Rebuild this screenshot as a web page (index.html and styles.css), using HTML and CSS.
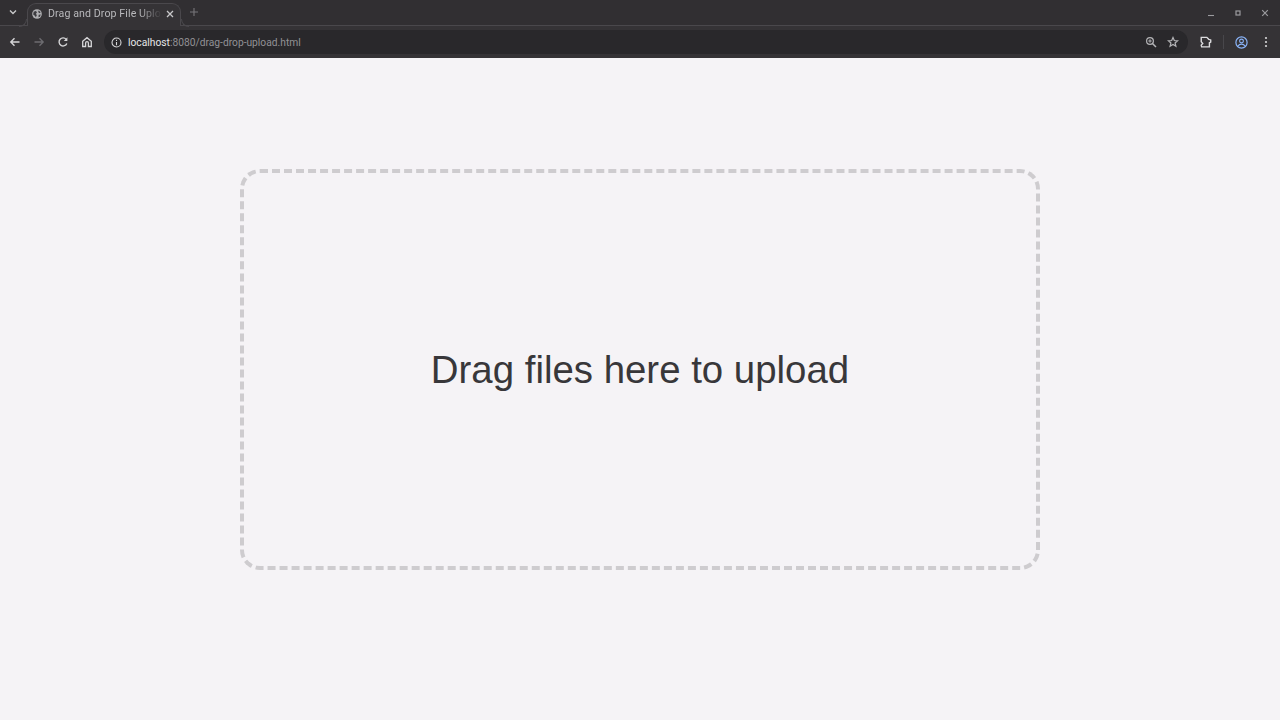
FILE: index.html
```html
<!DOCTYPE html>
<html lang="en">
<head>
    <meta charset="UTF-8">
    <title>Drag and Drop File Upload</title>
    <link rel="stylesheet" href="styles.css">
</head>
<body>
    <div class="browser">
        <div class="tabstrip">
            <svg class="tab-menu" width="10" height="10" viewBox="0 0 10 10"><path d="M2 3.5 5 6.5 8 3.5" fill="none" stroke="#c8c8ca" stroke-width="1.4"/></svg>
            <div class="tab">
                <svg class="favicon" width="10" height="10" viewBox="0 0 12 12">
                    <circle cx="6" cy="6" r="5.8" fill="#b0b0b3"/>
                    <path d="M2 3.2 4.6 2.4 6 4 4.8 5.6 5.8 7.4 4.6 10 3.4 8 1.4 6.6ZM8 1.8 10.4 4 9 5 7.4 3.6ZM8 7 10.6 6.6 9.4 9.4 7.8 9.8Z" fill="#3d3c40"/>
                </svg>
                <span class="tab-title">Drag and Drop File Upload</span>
                <svg class="tab-close" width="8" height="8" viewBox="0 0 8 8"><path d="M1 1 7 7M7 1 1 7" stroke="#c8c8ca" stroke-width="1.3"/></svg>
            </div>
            <svg class="new-tab" width="10" height="10" viewBox="0 0 10 10"><path d="M5 1V9M1 5H9" stroke="#77767a" stroke-width="1.1"/></svg>
            <div class="window-controls">
                <svg width="10" height="10" viewBox="0 0 10 10"><path d="M2 7.5H8" stroke="#9b9b9e" stroke-width="1.1"/></svg>
                <svg width="10" height="10" viewBox="0 0 10 10"><rect x="3" y="3" width="4" height="4" fill="none" stroke="#9b9b9e" stroke-width="1.2"/></svg>
                <svg width="10" height="10" viewBox="0 0 10 10"><path d="M2.2 2.2 7.8 7.8M7.8 2.2 2.2 7.8" stroke="#9b9b9e" stroke-width="1.2"/></svg>
            </div>
        </div>
        <div class="toolbar">
            <div class="nav-buttons">
                <svg width="12" height="12" viewBox="0 0 12 12"><path d="M10.5 6H2M5.5 2.2 1.8 6 5.5 9.8" fill="none" stroke="#d6d6d8" stroke-width="1.4"/></svg>
                <svg width="12" height="12" viewBox="0 0 12 12"><path d="M1.5 6H10M6.5 2.2 10.2 6 6.5 9.8" fill="none" stroke="#6d6c70" stroke-width="1.3"/></svg>
                <svg width="12" height="12" viewBox="0 0 12 12"><path d="M9.8 7.4A4 4 0 1 1 9.2 3.4" fill="none" stroke="#d6d6d8" stroke-width="1.4"/><path d="M10.4 1.2V5H6.8Z" fill="#d6d6d8"/></svg>
                <svg width="12" height="12" viewBox="0 0 12 12"><path d="M1.7 5.3 6 1.7 10.3 5.3V10.5H7.4V7A1.4 1.4 0 0 0 4.6 7V10.5H1.7Z" fill="none" stroke="#d6d6d8" stroke-width="1.3"/></svg>
            </div>
            <div class="omnibox">
                <svg class="info-icon" width="11" height="11" viewBox="0 0 12 12"><circle cx="6" cy="6" r="4.9" fill="none" stroke="#d6d6d8" stroke-width="1.2"/><path d="M6 5.4V9M6 3V4.3" stroke="#d6d6d8" stroke-width="1.2"/></svg>
                <span class="url"><span class="url-host">localhost</span>:8080/drag-drop-upload.html</span>
                <div class="omnibox-actions">
                    <svg width="12" height="12" viewBox="0 0 12 12"><circle cx="5" cy="5" r="3.4" fill="none" stroke="#b4b4b7" stroke-width="1.2"/><path d="M7.5 7.5 11 11" stroke="#b4b4b7" stroke-width="1.5"/><path d="M3.3 5H6.7M5 3.3V6.7" stroke="#b4b4b7"/></svg>
                    <svg width="12" height="12" viewBox="0 0 12 12"><path d="M6 1.5 7.3 4.5 10.6 4.8 8.1 7 8.9 10.3 6 8.5 3.1 10.3 3.9 7 1.4 4.8 4.7 4.5Z" fill="none" stroke="#b4b4b7" stroke-width="1.2"/></svg>
                </div>
            </div>
            <div class="toolbar-right">
                <svg class="ext-icon" width="14" height="14" viewBox="0 0 13 13"><path d="M3 2.2H8.2L10 4 11.8 4.6V6.6L10.6 7.2V11H3.4L3 9.4 4.4 7.8 3 6.2Z" fill="none" stroke="#dcdcde" stroke-width="1.3"/></svg>
                <span class="toolbar-divider"></span>
                <svg class="profile-icon" width="13" height="13" viewBox="0 0 13 13"><circle cx="6.5" cy="6.5" r="5.6" fill="none" stroke="#8ab4f8" stroke-width="1.2"/><circle cx="6.5" cy="5" r="1.9" fill="none" stroke="#8ab4f8" stroke-width="1.1"/><path d="M2.9 10A4.4 4.4 0 0 1 10.1 10" fill="none" stroke="#8ab4f8" stroke-width="1.1"/></svg>
                <svg class="more-icon" width="4" height="12" viewBox="0 0 4 12"><circle cx="2" cy="2" r="1.1" fill="#d6d6d8"/><circle cx="2" cy="6" r="1.1" fill="#d6d6d8"/><circle cx="2" cy="10" r="1.1" fill="#d6d6d8"/></svg>
            </div>
        </div>
    </div>

    <div class="page">
        <div class="drop-zone">Drag files here to upload</div>
    </div>
</body>
</html>
```
FILE: styles.css
```css
html, body { margin: 0; padding: 0; height: 100%; overflow: hidden; }
body { background: #f5f3f6; font-family: "Liberation Sans", Arial, sans-serif; }

.browser { height: 58px; background: #353336; font-family: Roboto, "Liberation Sans", sans-serif; }

.tabstrip {
    height: 26px;
    box-sizing: border-box;
    padding-bottom: 1px;
    display: flex;
    align-items: center;
    background: #312f32;
    border-bottom: 1px solid #4a484c;
    position: relative;
}
.tab-menu { margin-left: 8px; }

.tab {
    width: 154px;
    height: 23px;
    margin: 3px 0 0 9px;
    padding: 0 6px 3px 4px;
    box-sizing: border-box;
    display: flex;
    align-items: center;
    align-self: flex-start;
    background: #353336;
    border: 1px solid #4a484c;
    border-bottom: none;
    border-radius: 9px 9px 0 0;
    position: relative;
}
.tab::before,
.tab::after {
    content: "";
    position: absolute;
    bottom: -1px;
    width: 8px;
    height: 8px;
    box-sizing: border-box;
    border-bottom: 1px solid #4a484c;
}
.tab::before { left: -9px; border-right: 1px solid #4a484c; border-bottom-right-radius: 8px; }
.tab::after { right: -9px; border-left: 1px solid #4a484c; border-bottom-left-radius: 8px; }

.favicon { flex: none; }
.tab-title {
    flex: 1;
    margin-left: 6px;
    font-size: 10.6px;
    letter-spacing: 0.1px;
    color: #b9b9bc;
    white-space: nowrap;
    overflow: hidden;
    -webkit-mask-image: linear-gradient(to right, #000 80%, transparent 100%);
    mask-image: linear-gradient(to right, #000 80%, transparent 100%);
}
.tab-close { flex: none; margin-left: 4px; }
.new-tab { margin-left: 8px; }
.window-controls { margin-left: auto; margin-top: 1px; display: flex; gap: 17px; padding-right: 10px; }

.toolbar { height: 31px; padding-top: 1px; box-sizing: border-box; display: flex; align-items: center; }
.nav-buttons { display: flex; gap: 12px; margin-left: 9px; }
.omnibox {
    flex: 1;
    height: 24px;
    margin-left: 11px;
    padding: 0 9px 0 7px;
    display: flex;
    align-items: center;
    background: #29282b;
    border-radius: 12px;
}
.info-icon { flex: none; }
.url { margin-left: 6px; font-size: 10.25px; color: #929195; white-space: nowrap; }
.url-host { color: #e6e6e8; }
.omnibox-actions { margin-left: auto; display: flex; gap: 10px; }
.toolbar-right { display: flex; align-items: center; margin-left: 10px; padding-right: 12px; }
.toolbar-divider { width: 1px; height: 14px; background: #48474b; margin: 0 11px; }
.more-icon { margin-left: 16px; }

.page { padding-top: 111px; display: flex; justify-content: center; }
.drop-zone {
    width: 800px;
    height: 401px;
    padding-top: 1px;
    box-sizing: border-box;
    border: 4px dashed #cecccf;
    border-radius: 20px;
    display: flex;
    align-items: center;
    justify-content: center;
    font-size: 38.4px;
    color: #38373a;
}
```
